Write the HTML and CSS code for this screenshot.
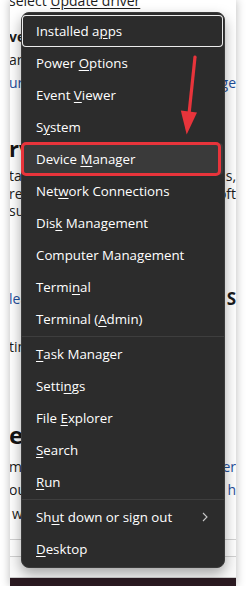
FILE: index.html
```html
<!DOCTYPE html>
<html lang="en">

<head>
    <meta charset="UTF-8">
    <meta name="viewport" content="width=device-width, initial-scale=1.0">
    <title>Win + X menu</title>
    <link rel="stylesheet" href="styles.css">
</head>

<body>
    <div class="shot">
        <div class="article">
            <div class="row top-line"><span>select <u>Update driver</u></span></div>
            <div class="para para-a">
                <div class="row"><b>verify the driver</b></div>
                <div class="row"><span>are you sure</span></div>
                <div class="row link"><span>ur device</span><span>page</span></div>
            </div>
            <h2 class="head head-a">rvers</h2>
            <div class="para para-b">
                <div class="row"><span>tall the drivers</span><span>s,</span></div>
                <div class="row"><span>restart the soft</span><span>oft</span></div>
                <div class="row"><span>sure</span></div>
            </div>
            <div class="para para-c">
                <div class="row"><span class="link">learn</span><b class="big">S</b></div>
            </div>
            <div class="para para-d">
                <div class="row"><span>time</span></div>
            </div>
            <h2 class="head head-b">egistry</h2>
            <div class="para para-e">
                <div class="row"><span>make</span><span class="link">er</span></div>
                <div class="row"><span>out</span><span class="link">h</span></div>
                <div class="row indent"><span>windows</span></div>
            </div>
            <div class="foot"></div>
            <div class="band"></div>
            <div class="taskbar"></div>
        </div>

        <div class="menu">
            <div class="item focus"><span>Installed a<u>p</u>ps</span></div>
            <div class="item"><span>Power <u>O</u>ptions</span></div>
            <div class="item"><span>Event <u>V</u>iewer</span></div>
            <div class="item"><span>S<u>y</u>stem</span></div>
            <div class="item marked"><span>Device <u>M</u>anager</span></div>
            <div class="item"><span>Net<u>w</u>ork Connections</span></div>
            <div class="item"><span>Dis<u>k</u> Management</span></div>
            <div class="item"><span>Computer Mana<u>g</u>ement</span></div>
            <div class="item"><span>Termi<u>n</u>al</span></div>
            <div class="item"><span>Terminal (<u>A</u>dmin)</span></div>
            <div class="sep"></div>
            <div class="item"><span><u>T</u>ask Manager</span></div>
            <div class="item"><span>Setti<u>n</u>gs</span></div>
            <div class="item"><span>File <u>E</u>xplorer</span></div>
            <div class="item"><span><u>S</u>earch</span></div>
            <div class="item"><span><u>R</u>un</span></div>
            <div class="sep"></div>
            <div class="item">
                <span>Sh<u>u</u>t down or sign out</span>
                <svg class="chev" width="6" height="10" viewBox="0 0 6 10">
                    <polyline points="1,1 5,5 1,9" fill="none" stroke="#c9c9c9" stroke-width="1.1" />
                </svg>
            </div>
            <div class="item"><span><u>D</u>esktop</span></div>
        </div>

        <!-- red pointer drawn over the menu -->
        <svg class="arrow" width="40" height="90" viewBox="170 50 40 90">
            <line x1="195" y1="57" x2="189" y2="114" stroke="#e8343b" stroke-width="3.2" stroke-linecap="round" />
            <polygon points="180.8,110.6 197,112.6 186.7,134.5" fill="#e8343b" />
        </svg>
    </div>
</body>

</html>
```

FILE: styles.css
```css
* {
    margin: 0;
    padding: 0;
}

body {
    background: #ffffff;
    font-family: "Open Sans", "Noto Sans", sans-serif;
}

.shot {
    position: relative;
    margin: 0 10px;
    height: 586px;
    overflow: hidden;
    background: #ffffff;
    box-shadow: 0 0 9px rgba(0, 0, 0, 0.28);
}

.article {
    margin-left: -1px;
    color: #1c1c1c;
    font-size: 14px;
}

.row {
    display: flex;
    justify-content: space-between;
    white-space: nowrap;
    height: 18px;
    line-height: 18px;
    overflow: hidden;
}

.link {
    color: #1f4f9c;
}

.big {
    font-size: 17px;
}

.indent {
    padding-left: 3px;
}

.top-line {
    margin-top: -8px;
}

.top-line u {
    text-underline-offset: 2px;
}

.para-a {
    margin-top: 15px;
}

.para-a .row {
    height: 23px;
    line-height: 23px;
}

.head {
    font-weight: 700;
    white-space: nowrap;
    color: #141414;
}

.head-a {
    margin-top: 41px;
    font-size: 22px;
    line-height: 26px;
}

.para-b {
    margin-top: 6px;
}

.para-b .row {
    height: 17.5px;
    line-height: 17.5px;
}

.para-c {
    margin-top: 70px;
}

.para-d {
    margin-top: 30px;
}

.head-b {
    margin-top: 65px;
    font-size: 24px;
    line-height: 28px;
}

.para-e {
    margin-top: 6px;
}

.para-e .row {
    height: 23.5px;
    line-height: 23.5px;
}

.foot {
    margin-top: 14px;
    height: 16px;
    border-top: 1px solid #d2d2d2;
    border-bottom: 1px solid #d2d2d2;
}

.band {
    height: 20px;
    background: #fbfbfb;
    border-bottom: 1px solid #cfcfcf;
}

.taskbar {
    height: 10px;
    background: #2b1a21;
}

/* the context menu */
.menu {
    position: absolute;
    left: 11px;
    top: 12px;
    width: 204px;
    box-sizing: border-box;
    padding: 2px 1px 2px 0;
    background: #2c2c2c;
    border: 1px solid #3b3b3b;
    border-radius: 8px;
    box-shadow: 0 6px 14px rgba(0, 0, 0, 0.35);
    color: #ffffff;
    font-family: "Open Sans", "Noto Sans", sans-serif;
    font-size: 13.3px;
}

.item {
    position: relative;
    display: flex;
    align-items: center;
    justify-content: space-between;
    height: 32px;
    padding: 0 15px 0 14px;
    border-radius: 4px;
    white-space: nowrap;
}

.item u {
    text-decoration-thickness: 1px;
    text-underline-offset: 2px;
}

.focus {
    box-shadow: inset 0 0 0 1px #ececec;
}

.marked {
    background: #3a3a3a;
}

.marked::after {
    content: "";
    position: absolute;
    left: -1px;
    right: 2px;
    top: -1px;
    bottom: -1px;
    border: 3px solid #e8343b;
    border-radius: 5px;
}

.sep {
    height: 1px;
    margin: 1px -1px 1px 0;
    background: #3e3e3e;
}

.chev {
    display: block;
}

.arrow {
    position: absolute;
    left: 160px;
    top: 50px;
}
```
